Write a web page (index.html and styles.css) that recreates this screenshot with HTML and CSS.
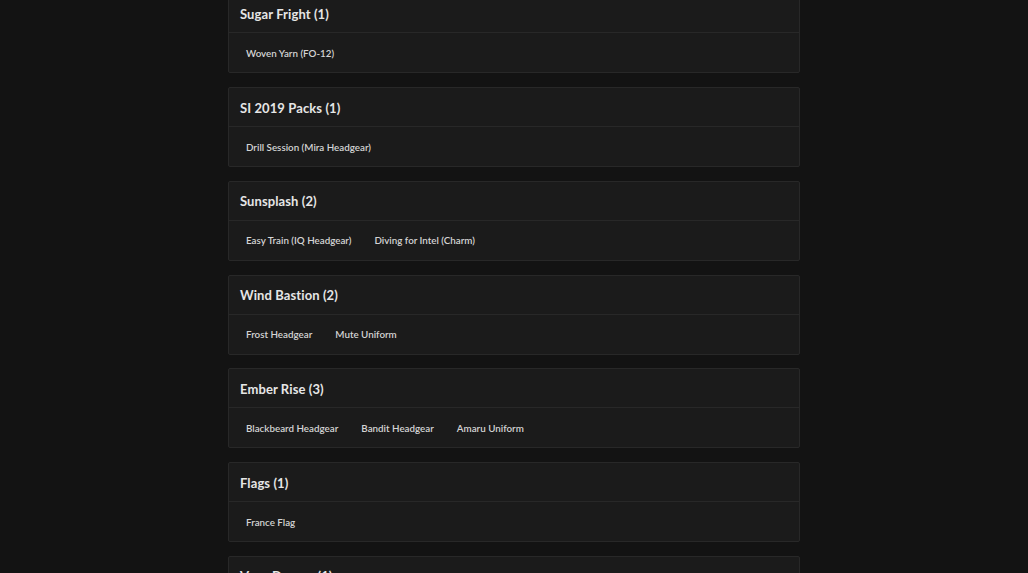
FILE: index.html
```html
<!DOCTYPE html>
<html>
<head>
<meta charset="utf-8">
<link rel="stylesheet" href="styles.css">
</head>
<body>
<main class="list">
  <section class="card">
    <h2 class="card-title">Sugar Fright (1)</h2>
    <div class="card-items"><span class="item">Woven Yarn (FO-12)</span></div>
  </section>
  <section class="card">
    <h2 class="card-title">SI 2019 Packs (1)</h2>
    <div class="card-items"><span class="item">Drill Session (Mira Headgear)</span></div>
  </section>
  <section class="card">
    <h2 class="card-title">Sunsplash (2)</h2>
    <div class="card-items"><span class="item">Easy Train (IQ Headgear)</span><span class="item">Diving for Intel (Charm)</span></div>
  </section>
  <section class="card">
    <h2 class="card-title">Wind Bastion (2)</h2>
    <div class="card-items"><span class="item">Frost Headgear</span><span class="item">Mute Uniform</span></div>
  </section>
  <section class="card">
    <h2 class="card-title">Ember Rise (3)</h2>
    <div class="card-items"><span class="item">Blackbeard Headgear</span><span class="item">Bandit Headgear</span><span class="item">Amaru Uniform</span></div>
  </section>
  <section class="card">
    <h2 class="card-title">Flags (1)</h2>
    <div class="card-items"><span class="item">France Flag</span></div>
  </section>
  <section class="card">
    <h2 class="card-title">Vega Decree (1)</h2>
    <div class="card-items"><span class="item">Item</span></div>
  </section>
</main>
</body>
</html>
```

FILE: styles.css
```css
html, body {
  margin: 0;
  padding: 0;
  background: #131313;
  overflow: hidden;
}
body {
  font-family: "Lato", "Liberation Sans", sans-serif;
  color: #e8e8e8;
  height: 573px;
}
.list {
  width: 572px;
  margin: -6.6px auto 0;
  display: flex;
  flex-direction: column;
  gap: 13.75px;
}
.card {
  background: #1b1b1b;
  border: 1px solid #282828;
  border-radius: 2px;
}
.card-title {
  margin: 0;
  height: 39px;
  box-sizing: border-box;
  padding: 1px 11px 0;
  display: flex;
  align-items: center;
  font-size: 13px;
  font-weight: 700;
  letter-spacing: 0.1px;
  color: #e6e6e6;
  border-bottom: 1px solid #282828;
}
.card-items {
  height: 39px;
  display: flex;
  align-items: center;
  gap: 23px;
  padding: 0 17px;
}
.item {
  font-size: 9.8px;
  font-weight: 600;
  color: #d4d4d4;
}
```
